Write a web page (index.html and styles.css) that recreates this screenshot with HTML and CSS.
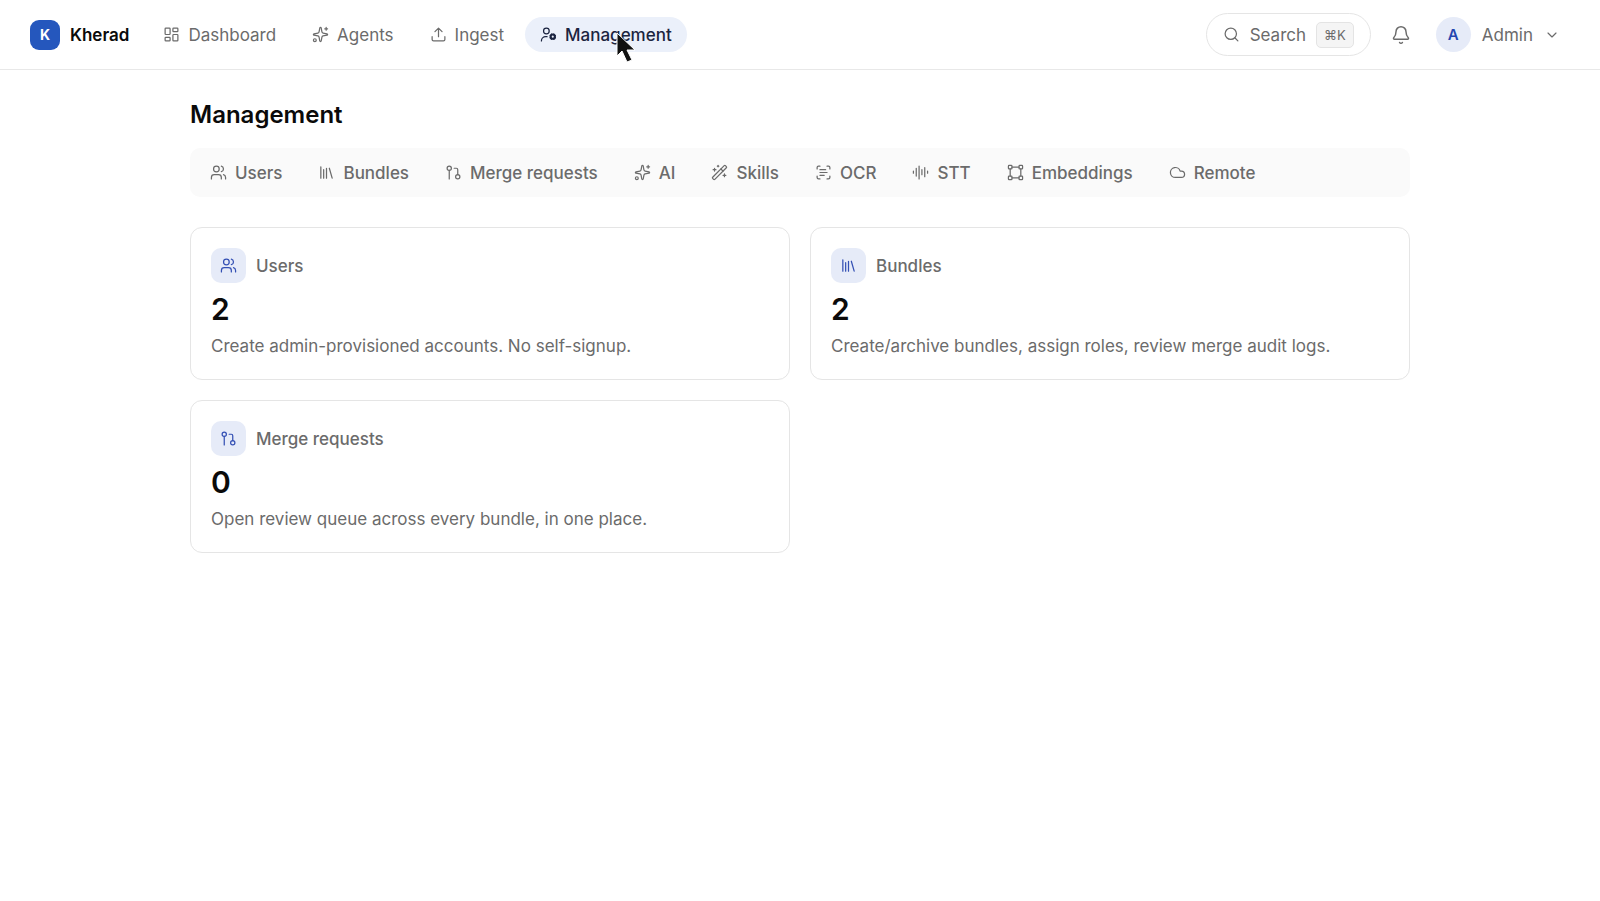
FILE: index.html
```html
<!DOCTYPE html>
<html lang="en">
<head>
    <meta charset="UTF-8">
    <meta name="viewport" content="width=device-width, initial-scale=1.0">
    <title>Management - Kherad</title>
    <link rel="stylesheet" href="styles.css">
</head>
<body>
    <!-- icon set -->
    <svg class="sprite" aria-hidden="true">
        <symbol id="i-dashboard" viewBox="0 0 24 24">
            <rect x="3" y="3" width="7" height="9" rx="1"/>
            <rect x="14" y="3" width="7" height="5" rx="1"/>
            <rect x="14" y="12" width="7" height="9" rx="1"/>
            <rect x="3" y="16" width="7" height="5" rx="1"/>
        </symbol>
        <symbol id="i-sparkles" viewBox="0 0 24 24">
            <path d="M11.017 2.814a1 1 0 0 1 1.966 0l1.051 5.558a2 2 0 0 0 1.594 1.594l5.558 1.051a1 1 0 0 1 0 1.966l-5.558 1.051a2 2 0 0 0-1.594 1.594l-1.051 5.558a1 1 0 0 1-1.966 0l-1.051-5.558a2 2 0 0 0-1.594-1.594l-5.558-1.051a1 1 0 0 1 0-1.966l5.558-1.051a2 2 0 0 0 1.594-1.594z"/>
            <path d="M20 2v4M22 4h-4"/>
            <circle cx="4" cy="20" r="2"/>
        </symbol>
        <symbol id="i-upload" viewBox="0 0 24 24">
            <path d="M12 3v12M17 8l-5-5-5 5M21 15v4a2 2 0 0 1-2 2H5a2 2 0 0 1-2-2v-4"/>
        </symbol>
        <symbol id="i-user-cog" viewBox="0 0 24 24">
            <circle cx="9" cy="7" r="4"/>
            <path d="M10 15H8a6 6 0 0 0-6 6"/>
            <circle cx="18" cy="15" r="3" stroke-width="3"/>
            <path d="m14.305 16.53.923-.382M15.228 13.852l-.923-.383M16.852 12.228l-.383-.923M16.852 17.772l-.383.924M19.148 12.228l.383-.923M19.53 18.696l-.382-.924M20.772 13.852l.924-.383M20.772 16.148l.924.383"/>
        </symbol>
        <symbol id="i-search" viewBox="0 0 24 24">
            <circle cx="11" cy="11" r="8"/>
            <path d="m21 21-4.34-4.34"/>
        </symbol>
        <symbol id="i-bell" viewBox="0 0 24 24">
            <path d="M10.268 21a2 2 0 0 0 3.464 0"/>
            <path d="M3.262 15.326A1 1 0 0 0 4 17h16a1 1 0 0 0 .74-1.673C19.41 13.956 18 12.499 18 8A6 6 0 0 0 6 8c0 4.499-1.411 5.956-2.738 7.326"/>
        </symbol>
        <symbol id="i-chevron" viewBox="0 0 24 24">
            <path d="m6 9 6 6 6-6"/>
        </symbol>
        <symbol id="i-users" viewBox="0 0 24 24">
            <path d="M16 21v-2a4 4 0 0 0-4-4H6a4 4 0 0 0-4 4v2"/>
            <path d="M16 3.128a4 4 0 0 1 0 7.744M22 21v-2a4 4 0 0 0-3-3.87"/>
            <circle cx="9" cy="7" r="4"/>
        </symbol>
        <symbol id="i-library" viewBox="0 0 24 24">
            <path d="m16 6 4 14M12 6v14M8 8v12M4 4v16"/>
        </symbol>
        <symbol id="i-merge" viewBox="0 0 24 24">
            <circle cx="18" cy="18" r="3"/>
            <circle cx="6" cy="6" r="3"/>
            <path d="M13 6h3a2 2 0 0 1 2 2v7M6 9v12"/>
        </symbol>
        <symbol id="i-wand" viewBox="0 0 24 24">
            <path d="m21.64 3.64-1.28-1.28a1.21 1.21 0 0 0-1.72 0L2.36 18.64a1.21 1.21 0 0 0 0 1.72l1.28 1.28a1.2 1.2 0 0 0 1.72 0L21.64 5.36a1.2 1.2 0 0 0 0-1.72"/>
            <path d="m14 7 3 3M5 6v4M19 14v4M10 2v2M7 8H3M21 16h-4M11 3H9"/>
        </symbol>
        <symbol id="i-scan" viewBox="0 0 24 24">
            <path d="M3 7V5a2 2 0 0 1 2-2h2M17 3h2a2 2 0 0 1 2 2v2M21 17v2a2 2 0 0 1-2 2h-2M7 21H5a2 2 0 0 1-2-2v-2"/>
            <path d="M7 8h8M7 12h10M7 16h6"/>
        </symbol>
        <symbol id="i-audio" viewBox="0 0 24 24">
            <path d="M2 10v3M6 6v11M10 3v18M14 8v7M18 5v13M22 10v3"/>
        </symbol>
        <symbol id="i-nodes" viewBox="0 0 24 24">
            <rect x="2" y="2" width="5" height="5" rx="1"/>
            <rect x="17" y="2" width="5" height="5" rx="1"/>
            <rect x="2" y="17" width="5" height="5" rx="1"/>
            <rect x="17" y="17" width="5" height="5" rx="1"/>
            <path d="M7 4.5h10M7 19.5h10M4.5 7v10M19.5 7v10"/>
        </symbol>
        <symbol id="i-cloud" viewBox="0 0 24 24">
            <path d="M17.5 19H9a7 7 0 1 1 6.71-9h1.79a4.5 4.5 0 1 1 0 9Z"/>
        </symbol>
    </svg>

    <header class="topbar">
        <a class="brand" href="#"><span class="logo">K</span>Kherad</a>
        <nav class="nav">
            <a class="nav-link" href="#"><svg class="icon"><use href="#i-dashboard"/></svg>Dashboard</a>
            <a class="nav-link" href="#"><svg class="icon"><use href="#i-sparkles"/></svg>Agents</a>
            <a class="nav-link" href="#"><svg class="icon"><use href="#i-upload"/></svg>Ingest</a>
            <a class="nav-link active" href="#"><svg class="icon"><use href="#i-user-cog"/></svg>Management</a>
        </nav>
        <div class="tools">
            <button class="search" type="button"><svg class="icon"><use href="#i-search"/></svg>Search<kbd>⌘K</kbd></button>
            <button class="bell" type="button" aria-label="Notifications"><svg class="icon"><use href="#i-bell"/></svg></button>
            <button class="account" type="button"><span class="avatar">A</span>Admin<svg class="icon small"><use href="#i-chevron"/></svg></button>
        </div>
    </header>

    <main class="page">
        <h1>Management</h1>
        <nav class="tabs">
            <a class="tab" href="#"><svg class="icon"><use href="#i-users"/></svg>Users</a>
            <a class="tab" href="#"><svg class="icon"><use href="#i-library"/></svg>Bundles</a>
            <a class="tab" href="#"><svg class="icon"><use href="#i-merge"/></svg>Merge requests</a>
            <a class="tab" href="#"><svg class="icon"><use href="#i-sparkles"/></svg>AI</a>
            <a class="tab" href="#"><svg class="icon"><use href="#i-wand"/></svg>Skills</a>
            <a class="tab" href="#"><svg class="icon"><use href="#i-scan"/></svg>OCR</a>
            <a class="tab" href="#"><svg class="icon"><use href="#i-audio"/></svg>STT</a>
            <a class="tab" href="#"><svg class="icon"><use href="#i-nodes"/></svg>Embeddings</a>
            <a class="tab" href="#"><svg class="icon"><use href="#i-cloud"/></svg>Remote</a>
        </nav>
        <div class="cards">
            <a class="card" href="#">
                <h2><span class="badge"><svg class="icon"><use href="#i-users"/></svg></span>Users</h2>
                <p class="count">2</p>
                <p class="desc">Create admin-provisioned accounts. No self-signup.</p>
            </a>
            <a class="card" href="#">
                <h2><span class="badge"><svg class="icon"><use href="#i-library"/></svg></span>Bundles</h2>
                <p class="count">2</p>
                <p class="desc">Create/archive bundles, assign roles, review merge audit logs.</p>
            </a>
            <a class="card" href="#">
                <h2><span class="badge"><svg class="icon"><use href="#i-merge"/></svg></span>Merge requests</h2>
                <p class="count">0</p>
                <p class="desc">Open review queue across every bundle, in one place.</p>
            </a>
        </div>
    </main>

    <!-- mouse pointer -->
    <svg class="pointer" viewBox="0 0 18 29" aria-hidden="true">
        <path d="M0 0v23l5-5 5 11 5-2-5-10h8z"/>
    </svg>
</body>
</html>
```
FILE: styles.css
```css
* {
    box-sizing: border-box;
    margin: 0;
    padding: 0;
}

body {
    font-family: Inter, "Liberation Sans", sans-serif;
    font-size: 17px;
    line-height: 24px;
    color: #6b6b6b;
    background: #fff;
}

a {
    color: inherit;
    text-decoration: none;
}

button {
    font: inherit;
    color: inherit;
    background: none;
    border: 0;
    cursor: pointer;
}

.sprite {
    display: none;
}

.icon {
    width: 17px;
    height: 17px;
    flex: none;
    fill: none;
    stroke: currentColor;
    stroke-width: 1.75;
    stroke-linecap: round;
    stroke-linejoin: round;
}

.icon.small {
    width: 16px;
    height: 16px;
}

/* top bar */
.topbar {
    display: flex;
    align-items: center;
    height: 70px;
    padding: 0 28px 0 30px;
    border-bottom: 1px solid #e8e8e8;
}

.brand {
    display: flex;
    align-items: center;
    gap: 10px;
    margin-right: 19px;
    font-weight: 600;
    color: #0a0a0a;
}

.logo {
    display: grid;
    place-items: center;
    width: 30px;
    height: 30px;
    border-radius: 9px;
    background: #2557bd;
    color: #fff;
    font-size: 14px;
    font-weight: 700;
}

.nav {
    display: flex;
    gap: 6px;
}

.nav-link {
    display: flex;
    align-items: center;
    gap: 8px;
    height: 35px;
    padding: 0 15px;
    border-radius: 18px;
}

.nav-link.active {
    background: #ebf0fa;
    color: #1b2440;
    font-weight: 500;
}

.tools {
    display: flex;
    align-items: center;
    margin-left: auto;
}

.search {
    display: flex;
    align-items: center;
    gap: 10px;
    height: 43px;
    padding: 0 16px;
    border: 1px solid #e5e5e5;
    border-radius: 22px;
}

kbd {
    padding: 0 7px;
    border: 1px solid #e4e4e4;
    border-radius: 5px;
    background: #f5f5f5;
    font-family: inherit;
    font-size: 13px;
}

.bell {
    display: grid;
    place-items: center;
    width: 35px;
    height: 35px;
    margin: 0 17px 0 13px;
}

.bell .icon {
    width: 20px;
    height: 20px;
}

.account {
    display: flex;
    align-items: center;
    gap: 11px;
    padding-right: 12px;
}

.avatar {
    display: grid;
    place-items: center;
    width: 35px;
    height: 35px;
    border-radius: 50%;
    background: #e6ebf8;
    color: #2445b0;
    font-size: 15px;
    font-weight: 600;
}

/* page */
.page {
    max-width: 1260px;
    margin: 0 auto;
    padding: 29px 20px;
}

h1 {
    font-size: 24px;
    line-height: 32px;
    font-weight: 600;
    color: #0a0a0a;
}

.tabs {
    display: flex;
    gap: 6px;
    margin-top: 17px;
    padding: 5px;
    border-radius: 10px;
    background: #fafafa;
}

.tab {
    display: flex;
    align-items: center;
    gap: 8px;
    height: 39px;
    padding: 0 15px;
    font-weight: 500;
}

.cards {
    display: grid;
    grid-template-columns: 1fr 1fr;
    gap: 20px;
    margin-top: 30px;
}

.card {
    padding: 20px 20px 21px;
    border: 1px solid #e5e5e5;
    border-radius: 12px;
}

.card h2 {
    display: flex;
    align-items: center;
    gap: 10px;
    font-size: 17px;
    font-weight: 500;
}

.badge {
    display: grid;
    place-items: center;
    width: 35px;
    height: 35px;
    border-radius: 10px;
    background: #e6ebf8;
    color: #3450b4;
}

.count {
    margin-top: 8px;
    font-size: 30px;
    line-height: 36px;
    font-weight: 600;
    color: #0a0a0a;
}

.desc {
    margin-top: 7px;
}

.pointer {
    position: absolute;
    top: 33px;
    left: 617px;
    width: 18px;
    height: 29px;
    fill: #111;
    stroke: #fff;
    stroke-width: 1;
    overflow: visible;
    pointer-events: none;
}
```
